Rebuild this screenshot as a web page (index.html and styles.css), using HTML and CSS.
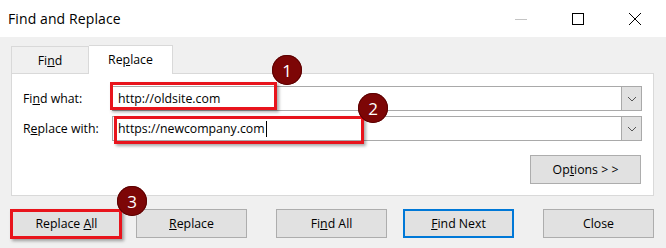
FILE: index.html
```html
<!DOCTYPE html>
<html lang="en">
<head>
    <meta charset="UTF-8">
    <title>Find and Replace</title>
    <link rel="stylesheet" href="styles.css">
</head>
<body>
    <div class="window">
        <header class="titlebar">
            <span class="title">Find and Replace</span>
            <div class="caption-btns">
                <span class="cap">
                    <svg width="14" height="14" viewBox="0 0 14 14"><line x1="1" y1="7.5" x2="13" y2="7.5" stroke="#c4c4c4" stroke-width="1"/></svg>
                </span>
                <span class="cap">
                    <svg width="14" height="14" viewBox="0 0 14 14"><rect x="1.5" y="1.5" width="11" height="11" fill="none" stroke="#000" stroke-width="1"/></svg>
                </span>
                <span class="cap">
                    <svg width="14" height="14" viewBox="0 0 14 14"><path d="M1 1 L13 13 M13 1 L1 13" stroke="#000" stroke-width="1"/></svg>
                </span>
            </div>
        </header>

        <main class="dialog">
            <div class="tabs">
                <div class="tab">Fi<u>n</u>d</div>
                <div class="tab active">Re<u>p</u>lace</div>
            </div>

            <div class="panel">
                <div class="field">
                    <label class="field-label">Fi<u>n</u>d what:</label>
                    <div class="combo">
                        <span class="combo-text">http://oldsite.com</span>
                        <span class="combo-arrow">
                            <svg width="10" height="6" viewBox="0 0 10 6"><path d="M1 1 L5 5 L9 1" fill="none" stroke="#555" stroke-width="1"/></svg>
                        </span>
                    </div>
                </div>
                <div class="field">
                    <label class="field-label">R<u>e</u>place with:</label>
                    <div class="combo">
                        <span class="combo-text">https://newcompany.com<span class="caret"></span></span>
                        <span class="combo-arrow">
                            <svg width="10" height="6" viewBox="0 0 10 6"><path d="M1 1 L5 5 L9 1" fill="none" stroke="#555" stroke-width="1"/></svg>
                        </span>
                    </div>
                </div>
                <div class="options-row">
                    <button class="btn">Op<u>t</u>ions &gt; &gt;</button>
                </div>
            </div>

            <div class="actions">
                <button class="btn btn-replace-all">Replace <u>A</u>ll</button>
                <button class="btn btn-replace"><u>R</u>eplace</button>
                <button class="btn btn-find-all">Fi<u>n</u>d All</button>
                <button class="btn btn-find-next default"><u>F</u>ind Next</button>
                <button class="btn btn-close">Close</button>
            </div>
        </main>

        <!-- annotations -->
        <div class="mark mark-1"></div>
        <div class="mark mark-2"></div>
        <div class="mark mark-3"></div>
        <div class="step step-1">1</div>
        <div class="step step-2">2</div>
        <div class="step step-3">3</div>
    </div>
</body>
</html>
```

FILE: styles.css
```css
:root {
    --face: #f0f0f0;
    --white: #ffffff;
    --btn: #e1e1e1;
    --btn-border: #adadad;
    --line: #d9d9d9;
    --field-border: #a9a9a9;
    --accent: #0078d7;
    --mark: #e8141c;
    --step: #7d0606;
    --text: #000000;
}

body {
    margin: 0;
    background: var(--face);
    font-family: 'Open Sans', 'Noto Sans', sans-serif;
    color: var(--text);
}

.window {
    position: relative;
    width: 666px;
    height: 248px;
    overflow: hidden;
}

.titlebar {
    height: 37px;
    background: var(--white);
    display: flex;
    align-items: center;
    justify-content: space-between;
}

.title {
    padding-left: 8px;
    font-size: 14px;
    letter-spacing: 0.1px;
}

.caption-btns {
    display: flex;
    align-items: center;
    padding-right: 3px;
}

.cap {
    width: 57px;
    display: flex;
    justify-content: center;
}

.cap svg {
    display: block;
}

.dialog {
    padding: 9px 12px 0 11px;
}

.tabs {
    display: flex;
    align-items: flex-end;
    height: 27px;
}

.tab {
    width: 76px;
    height: 25px;
    border: 1px solid var(--line);
    border-bottom: none;
    background: var(--face);
    font-size: 12.3px;
    display: flex;
    align-items: center;
    justify-content: center;
    padding-top: 1px;
}

.tab.active {
    width: 83px;
    height: 27px;
    margin-bottom: -1px;
    background: var(--white);
    border-left: none;
    position: relative;
    z-index: 1;
    padding-top: 0;
    padding-bottom: 1px;
}

.panel {
    background: var(--white);
    border: 1px solid var(--line);
    padding: 12px 11px 11px 11px;
    display: flex;
    flex-direction: column;
    gap: 5px;
}

.field {
    display: flex;
    align-items: center;
}

.field-label {
    width: 89px;
    font-size: 12.3px;
}

.combo {
    flex: 1;
    height: 25px;
    box-sizing: border-box;
    border: 1px solid var(--field-border);
    display: flex;
    align-items: stretch;
}

.combo-text {
    flex: 1;
    font-size: 12.3px;
    padding-left: 5px;
    display: flex;
    align-items: center;
}

.caret {
    display: inline-block;
    width: 1px;
    height: 16px;
    background: #000;
    margin-left: 1px;
}

.combo-arrow {
    width: 19px;
    background: var(--btn);
    border-left: 1px solid var(--field-border);
    display: flex;
    align-items: center;
    justify-content: center;
}

.options-row {
    display: flex;
    justify-content: flex-end;
    margin-top: 9px;
}

.btn {
    width: 111px;
    height: 29px;
    background: var(--btn);
    border: 1px solid var(--btn-border);
    font-family: inherit;
    font-size: 12.3px;
    color: var(--text);
    padding: 0;
}

.options-row .btn {
    margin-right: 1px;
}

.actions {
    display: flex;
    margin-top: 13px;
}

.btn-replace {
    margin-left: 14px;
}

.btn-find-all {
    margin-left: 29px;
}

.btn-find-next {
    margin-left: 16px;
}

.btn-close {
    margin-left: 29px;
}

.btn.default {
    border: 2px solid var(--accent);
}

/* red highlight boxes and numbered markers */
.mark {
    position: absolute;
    border: 3px solid var(--mark);
    box-shadow: 2px 2px 3px rgba(0, 0, 0, 0.35);
    box-sizing: border-box;
}

.mark-1 {
    left: 110px;
    top: 82px;
    width: 167px;
    height: 28px;
}

.mark-2 {
    left: 114px;
    top: 116px;
    width: 250px;
    height: 28px;
}

.mark-3 {
    left: 10px;
    top: 209px;
    width: 112px;
    height: 30px;
}

.step {
    position: absolute;
    width: 30px;
    height: 30px;
    border-radius: 50%;
    background: var(--step);
    box-shadow: inset 0 0 0 1px #5a0202;
    color: var(--white);
    font-size: 17px;
    display: flex;
    align-items: center;
    justify-content: center;
}

.step-1 {
    left: 272px;
    top: 55px;
}

.step-2 {
    left: 358px;
    top: 93px;
}

.step-3 {
    left: 117px;
    top: 186px;
}
```
